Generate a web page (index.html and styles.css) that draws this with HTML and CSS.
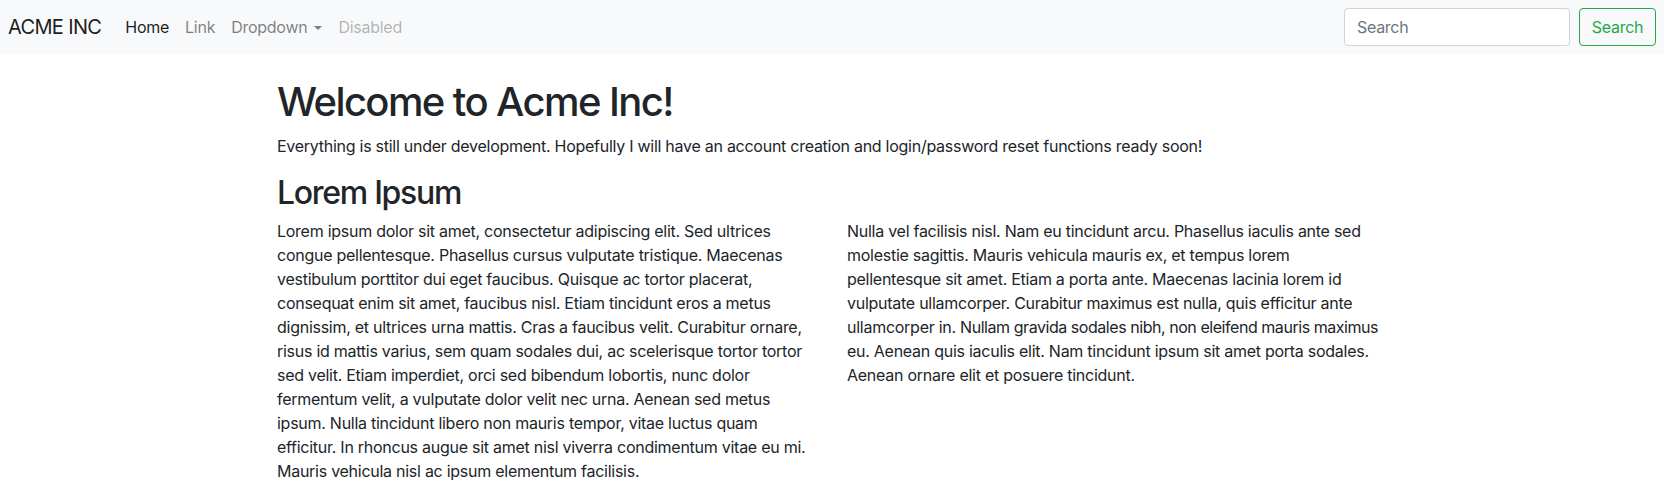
FILE: index.html
```html
<!DOCTYPE html>
<html lang="en">
<head>
<meta charset="utf-8">
<title>Acme Inc</title>
<link rel="stylesheet" href="styles.css">
</head>
<body>
<nav class="navbar">
  <a class="brand" href="#">ACME INC</a>
  <ul class="nav">
    <li><a class="nav-link active" href="#">Home</a></li>
    <li><a class="nav-link" href="#">Link</a></li>
    <li><a class="nav-link dropdown" href="#">Dropdown<span class="caret"></span></a></li>
    <li><a class="nav-link disabled" href="#">Disabled</a></li>
  </ul>
  <form class="search">
    <input class="search-input" type="search" placeholder="Search">
    <button class="btn-search" type="button">Search</button>
  </form>
</nav>
<main class="container">
  <h1>Welcome to Acme Inc!</h1>
  <p>Everything is still under development. Hopefully I will have an account creation and login/password reset functions ready soon!</p>
  <h2>Lorem Ipsum</h2>
  <div class="row">
    <div class="col">
      <p>Lorem ipsum dolor sit amet, consectetur adipiscing elit. Sed ultrices congue pellentesque. Phasellus cursus vulputate tristique. Maecenas vestibulum porttitor dui eget faucibus. Quisque ac tortor placerat, consequat enim sit amet, faucibus nisl. Etiam tincidunt eros a metus dignissim, et ultrices urna mattis. Cras a faucibus velit. Curabitur ornare, risus id mattis varius, sem quam sodales dui, ac scelerisque tortor tortor sed velit. Etiam imperdiet, orci sed bibendum lobortis, nunc dolor fermentum velit, a vulputate dolor velit nec urna. Aenean sed metus ipsum. Nulla tincidunt libero non mauris tempor, vitae luctus quam efficitur. In rhoncus augue sit amet nisl viverra condimentum vitae eu mi. Mauris vehicula nisl ac ipsum elementum facilisis.</p>
    </div>
    <div class="col">
      <p class="col-text">Nulla vel facilisis nisl. Nam eu tincidunt arcu. Phasellus iaculis ante sed molestie sagittis. Mauris vehicula mauris ex, et tempus lorem pellentesque sit amet. Etiam a porta ante. Maecenas lacinia lorem id vulputate ullamcorper. Curabitur maximus est nulla, quis efficitur ante ullamcorper in. <span class="tight">Nullam gravida sodales nibh, non eleifend mauris maximus</span> eu. Aenean quis iaculis elit. Nam tincidunt ipsum sit amet porta sodales. Aenean ornare elit et posuere tincidunt.</p>
    </div>
  </div>
</main>
</body>
</html>
```
FILE: styles.css
```css
* { box-sizing: border-box; }
html, body { margin: 0; }
body {
  font-family: Inter, "Liberation Sans", sans-serif;
  font-size: 16px;
  line-height: 1.5;
  letter-spacing: -0.265px;
  color: #212529;
  background: #fff;
}
.navbar {
  display: flex;
  align-items: center;
  background: #f8f9fa;
  padding: 8px;
  height: 54px;
}
.brand {
  font-size: 20px;
  line-height: 30px;
  letter-spacing: -0.65px;
  color: rgba(0,0,0,.9);
  text-decoration: none;
  margin-right: 16px;
}
.nav {
  display: flex;
  list-style: none;
  margin: 0;
  padding: 0;
  flex: 1;
}
.nav-link {
  display: block;
  padding: 8px;
  color: rgba(0,0,0,.5);
  text-decoration: none;
}
.nav-link.active { color: rgba(0,0,0,.9); }
.nav-link.disabled { color: rgba(0,0,0,.3); }
.caret {
  display: inline-block;
  margin-left: 7px;
  vertical-align: 3px;
  border-top: 4.5px solid currentColor;
  border-left: 4.5px solid transparent;
  border-right: 4.5px solid transparent;
}
.search {
  display: flex;
  align-items: center;
}
.search-input {
  width: 226px;
  height: 38px;
  padding: 6px 12px;
  font: inherit;
  letter-spacing: -0.3px;
  color: #495057;
  background: #fff;
  border: 1px solid #ced4da;
  border-radius: 4px;
  margin-right: 9px;
}
.search-input::placeholder { color: #6c757d; }
.btn-search {
  width: 77px;
  height: 38px;
  padding: 6px 0;
  font: inherit;
  letter-spacing: -0.3px;
  color: #28a745;
  background: transparent;
  border: 1px solid #28a745;
  border-radius: 4px;
}
.container {
  width: 1140px;
  margin: 24px auto 0;
  padding: 0 15px;
}
h1, h2 {
  font-weight: 500;
  line-height: 1.2;
  margin: 0 0 8px;
}
h1 { font-size: 40px; letter-spacing: -1.6px; }
h2 { font-size: 32px; letter-spacing: -1.3px; margin-top: 3px; margin-bottom: 7px; }
p { margin: 0 0 16px; }
.tight { letter-spacing: -0.45px; }
.row {
  display: flex;
  margin: 0 -15px;
}
.col {
  flex: 0 0 50%;
  padding: 0 15px;
}
```
